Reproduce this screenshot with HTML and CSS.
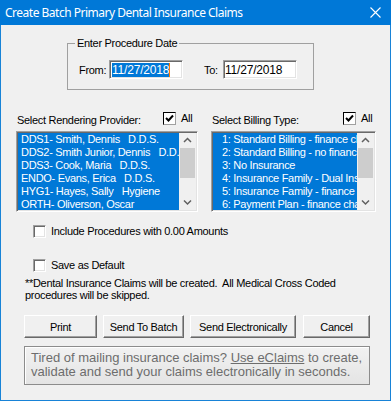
FILE: index.html
```html
<!DOCTYPE html>
<html lang="en">
<head>
    <meta charset="UTF-8">
    <title>Create Batch Primary Dental Insurance Claims</title>
    <link rel="stylesheet" href="styles.css">
</head>
<body>
    <div class="window">
        <!-- Title Bar -->
        <div class="titlebar">
            <span class="title">Create Batch Primary Dental Insurance Claims</span>
            <svg class="close" width="11" height="11" viewBox="0 0 11 11">
                <path d="M0.5 0.5 L10.5 10.5 M10.5 0.5 L0.5 10.5" stroke="#fff" stroke-width="1.1" fill="none"/>
            </svg>
        </div>

        <div class="dialog">
            <!-- Date Range -->
            <fieldset class="date-group">
                <legend>Enter Procedure Date</legend>
                <div class="date-row">
                    <span class="date-label from-label">From:</span>
                    <span class="textbox"><span class="selected-text">11/27/2018</span><span class="caret"></span></span>
                    <span class="date-label to-label">To:</span>
                    <span class="textbox">11/27/2018</span>
                </div>
            </fieldset>

            <!-- Lists -->
            <div class="lists">
                <div class="list-col provider-col">
                    <div class="list-head">
                        <span class="list-title">Select Rendering Provider:</span>
                        <span class="check-all">
                            <span class="checkbox checked">
                                <svg width="9" height="9" viewBox="0 0 9 9"><path d="M1 4 L3.5 6.5 L8 1.5" stroke="#000" stroke-width="2" fill="none"/></svg>
                            </span>
                            <span>All</span>
                        </span>
                    </div>
                    <div class="listbox">
                        <ul class="items provider-items">
                            <li>DDS1- Smith, Dennis&nbsp;&nbsp;&nbsp;D.D.S.</li>
                            <li>DDS2- Smith Junior, Dennis&nbsp;&nbsp;&nbsp;D.D.S.</li>
                            <li>DDS3- Cook, Maria&nbsp;&nbsp;&nbsp;D.D.S.</li>
                            <li>ENDO- Evans, Erica&nbsp;&nbsp;&nbsp;D.D.S.</li>
                            <li>HYG1- Hayes, Sally&nbsp;&nbsp;&nbsp;Hygiene</li>
                            <li>ORTH- Oliverson, Oscar</li>
                        </ul>
                        <div class="scrollbar">
                            <svg class="arrow" width="17" height="15" viewBox="0 0 17 15"><path d="M5 9 L8.5 5.5 L12 9" stroke="#606060" stroke-width="1.5" fill="none"/></svg>
                            <div class="thumb"></div>
                            <div class="track"></div>
                            <svg class="arrow" width="17" height="15" viewBox="0 0 17 15"><path d="M5 5.5 L8.5 9 L12 5.5" stroke="#606060" stroke-width="1.5" fill="none"/></svg>
                        </div>
                    </div>
                </div>

                <div class="list-col billing-col">
                    <div class="list-head">
                        <span class="list-title">Select Billing Type:</span>
                        <span class="check-all">
                            <span class="checkbox checked">
                                <svg width="9" height="9" viewBox="0 0 9 9"><path d="M1 4 L3.5 6.5 L8 1.5" stroke="#000" stroke-width="2" fill="none"/></svg>
                            </span>
                            <span>All</span>
                        </span>
                    </div>
                    <div class="listbox">
                        <ul class="items billing-items">
                            <li>1: Standard Billing - finance charges</li>
                            <li>2: Standard Billing - no finance charges</li>
                            <li>3: No Insurance</li>
                            <li>4: Insurance Family - Dual Insurance</li>
                            <li>5: Insurance Family - finance charges</li>
                            <li>6: Payment Plan - finance charges</li>
                        </ul>
                        <div class="scrollbar">
                            <svg class="arrow" width="17" height="15" viewBox="0 0 17 15"><path d="M5 9 L8.5 5.5 L12 9" stroke="#606060" stroke-width="1.5" fill="none"/></svg>
                            <div class="thumb"></div>
                            <div class="track"></div>
                            <svg class="arrow" width="17" height="15" viewBox="0 0 17 15"><path d="M5 5.5 L8.5 9 L12 5.5" stroke="#606060" stroke-width="1.5" fill="none"/></svg>
                        </div>
                    </div>
                </div>
            </div>

            <!-- Options -->
            <div class="option option-amounts">
                <span class="checkbox"></span>
                <span>Include Procedures with 0.00 Amounts</span>
            </div>
            <div class="option option-default">
                <span class="checkbox"></span>
                <span>Save as Default</span>
            </div>

            <p class="note">**Dental Insurance Claims will be created.&nbsp; All Medical Cross Coded<br>procedures will be skipped.</p>

            <!-- Buttons -->
            <div class="buttons">
                <button class="btn btn-print">Print</button>
                <button class="btn btn-batch">Send To Batch</button>
                <button class="btn btn-electronic">Send Electronically</button>
                <button class="btn btn-cancel">Cancel</button>
            </div>

            <div class="promo">
                <p>Tired of mailing insurance claims? <span class="link">Use eClaims</span> to create,</p>
                <p>validate and send your claims electronically in seconds.</p>
            </div>
        </div>
    </div>
</body>
</html>
```

FILE: styles.css
```css
* {
    margin: 0;
    padding: 0;
    box-sizing: border-box;
}

body {
    font-family: "Liberation Sans", Arial, sans-serif;
    font-size: 11px;
    letter-spacing: -0.3px;
    color: #000;
    background-color: #f0f0f0;
}

.window {
    width: 391px;
    height: 401px;
    border: 1px solid #1883d7;
    border-top: none;
    background-color: #f0f0f0;
}

/* Title Bar */
.titlebar {
    height: 25px;
    margin: 0 -1px;
    padding: 0 10px 0 5px;
    background-color: #0078d7;
    display: flex;
    align-items: center;
    justify-content: space-between;
}

.title {
    font-family: "Noto Sans", sans-serif;
    font-size: 12px;
    letter-spacing: -0.5px;
    color: #fff;
}

.dialog {
    padding-top: 12px;
}

/* Date group */
.date-group {
    margin-left: 66px;
    width: 247px;
    height: 53px;
    border: 1px solid #a0a0a0;
    padding: 0;
}

.date-group legend {
    margin-left: 7px;
    padding: 0 2px;
    line-height: 13px;
    font-size: 11px;
}

.date-row {
    display: flex;
    align-items: center;
    margin-top: 10px;
    padding-left: 11px;
}

.date-label {
    display: inline-block;
}

.from-label {
    width: 30px;
}

.to-label {
    width: 19px;
    margin-left: 21px;
}

.textbox {
    display: flex;
    align-items: center;
    width: 74px;
    height: 19px;
    padding-left: 1px;
    background-color: #fff;
    border: 1px solid;
    border-color: #a0a0a0 #fff #fff #a0a0a0;
    box-shadow: inset 1px 1px #696969, inset -1px -1px #e3e3e3;
    font-size: 12px;
    letter-spacing: -0.2px;
}

.selected-text {
    background-color: #0078d7;
    color: #fff;
    line-height: 14px;
    margin-left: 1px;
}

.caret {
    width: 1px;
    height: 14px;
    background-color: #ff7a00;
}

/* Lists */
.lists {
    display: flex;
    margin-top: 22px;
    margin-left: 15px;
}

.list-col {
    display: flex;
    flex-direction: column;
}

.provider-col {
    width: 182px;
}

.billing-col {
    width: 165px;
    margin-left: 13px;
}

.list-head {
    display: flex;
    height: 15px;
    padding-left: 1px;
}

.list-title {
    flex: 1;
    align-self: flex-end;
    line-height: 13px;
    white-space: nowrap;
}

.check-all {
    display: flex;
    align-items: flex-start;
    gap: 5px;
    line-height: 13px;
    width: 35px;
    flex: none;
}

.billing-col .check-all {
    width: 33px;
}

.checkbox {
    display: inline-flex;
    align-items: center;
    justify-content: center;
    flex: none;
    width: 13px;
    height: 13px;
    background-color: #fff;
    border: 1px solid;
    border-color: #a0a0a0 #fff #fff #a0a0a0;
    box-shadow: inset 1px 1px #696969, inset -1px -1px #e3e3e3;
}

.checkbox.checked {
    border-color: #000 #a0a0a0 #a0a0a0 #000;
    box-shadow: none;
}

.listbox {
    display: flex;
    height: 81px;
    margin-top: 4px;
    border: 1px solid;
    border-color: #a0a0a0 #fff #fff #a0a0a0;
    box-shadow: inset 1px 1px #696969, inset -1px -1px #e3e3e3;
    padding: 1px;
    overflow: hidden;
}

.items {
    flex: 1;
    list-style: none;
    background-color: #0078d7;
    color: #fff;
    overflow: hidden;
}

.items li {
    height: 13px;
    line-height: 13px;
    white-space: nowrap;
}

.provider-items li {
    padding-left: 3px;
}

.billing-items li {
    padding-left: 9px;
}

.scrollbar {
    width: 17px;
    display: flex;
    flex-direction: column;
    background-color: #f0f0f0;
}

.arrow {
    display: block;
    flex: none;
}

.thumb {
    height: 30px;
    margin: 0 1px;
    background-color: #cdcdcd;
}

.track {
    flex: 1;
}

/* Options */
.option {
    display: flex;
    align-items: center;
    gap: 5px;
    margin-left: 32px;
    height: 13px;
    line-height: 13px;
}

.option-amounts {
    margin-top: 13px;
}

.option-default {
    margin-top: 21px;
}

.note {
    margin: 5px 0 0 24px;
    line-height: 12px;
}

/* Buttons */
.buttons {
    display: flex;
    margin: 14px 0 0 23px;
}

.btn {
    height: 23px;
    font-family: "Liberation Sans", Arial, sans-serif;
    font-size: 11px;
    letter-spacing: -0.3px;
    color: #000;
    background-color: #f0f0f0;
    border: 1px solid;
    border-color: #fff #696969 #696969 #fff;
    box-shadow: inset -1px -1px #a0a0a0;
}

.btn-print {
    width: 73px;
}

.btn-batch {
    width: 81px;
    margin-left: 6px;
}

.btn-electronic {
    width: 106px;
    margin-left: 6px;
}

.btn-cancel {
    width: 67px;
    margin-left: 7px;
}

.promo {
    width: 346px;
    height: 39px;
    margin: 8px 0 0 23px;
    padding: 4px 0 0 6px;
    border: 1px solid #8c8c8c;
    box-shadow: inset 1px 1px #fff;
    background: linear-gradient(#f2f2f2, #e4e4e4);
    font-family: "Liberation Sans", Arial, sans-serif;
    font-size: 13px;
    letter-spacing: 0;
    line-height: 14px;
    color: #6d6d6d;
}

.link {
    text-decoration: underline;
}
```
